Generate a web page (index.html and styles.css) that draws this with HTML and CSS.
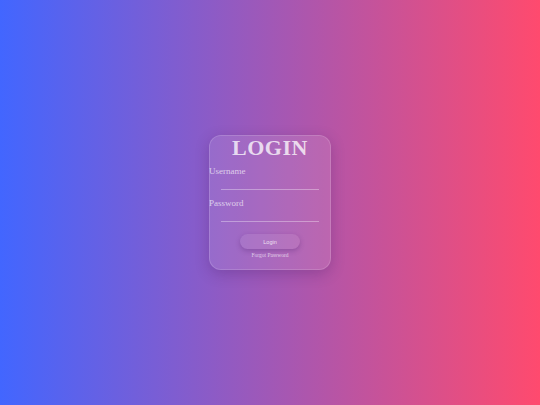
FILE: index.html
```html
<!DOCTYPE html>
<html>
<head>
<meta charset="utf-8">
<link rel="stylesheet" href="styles.css">
</head>
<body>
<div class="card">
  <h2 class="title">LOGIN</h2>
  <label class="label">Username</label>
  <div class="input"></div>
  <label class="label label-2">Password</label>
  <div class="input"></div>
  <button class="btn">Login</button>
  <a class="forgot">Forgot Password</a>
</div>
</body>
</html>
```
FILE: styles.css
```css
html, body {
  margin: 0;
  height: 100%;
}
body {
  width: 540px;
  height: 405px;
  background: linear-gradient(90deg, #4266ff 0%, #ff4a6e 100%);
  display: flex;
  align-items: center;
  justify-content: center;
  font-family: "Liberation Serif", "Times New Roman", serif;
}
.card {
  box-sizing: border-box;
  width: 122px;
  height: 135px;
  border-radius: 12px;
  background: rgba(255, 255, 255, 0.1);
  border: 1px solid rgba(255, 255, 255, 0.15);
  box-shadow: 0 4px 14px rgba(60, 20, 90, 0.25);
  display: flex;
  flex-direction: column;
  align-items: flex-start;
}
.title {
  margin: 1px 0 0 0;
  width: 100%;
  text-align: center;
  font-size: 22px;
  line-height: 22px;
  font-weight: bold;
  letter-spacing: 0.5px;
  color: rgba(255, 255, 255, 0.75);
}
.label {
  margin: 7px 0 0 -1px;
  font-size: 9px;
  line-height: 11px;
  color: rgba(255, 255, 255, 0.68);
}
.label-2 {
  margin-top: 8px;
}
.input {
  align-self: center;
  width: 98px;
  height: 12px;
  border-bottom: 1px solid rgba(255, 255, 255, 0.35);
}
.btn {
  align-self: center;
  margin-top: 12px;
  width: 60px;
  height: 15px;
  padding: 0;
  border: none;
  border-radius: 8px;
  background: rgba(255, 255, 255, 0.08);
  box-shadow: 0 2px 5px rgba(70, 20, 100, 0.28);
  font-family: "Liberation Sans", Arial, sans-serif;
  font-size: 5.5px;
  color: rgba(255, 255, 255, 0.8);
}
.forgot {
  align-self: center;
  margin-top: 3px;
  font-size: 5.5px;
  line-height: 7px;
  color: rgba(255, 255, 255, 0.68);
}
```
